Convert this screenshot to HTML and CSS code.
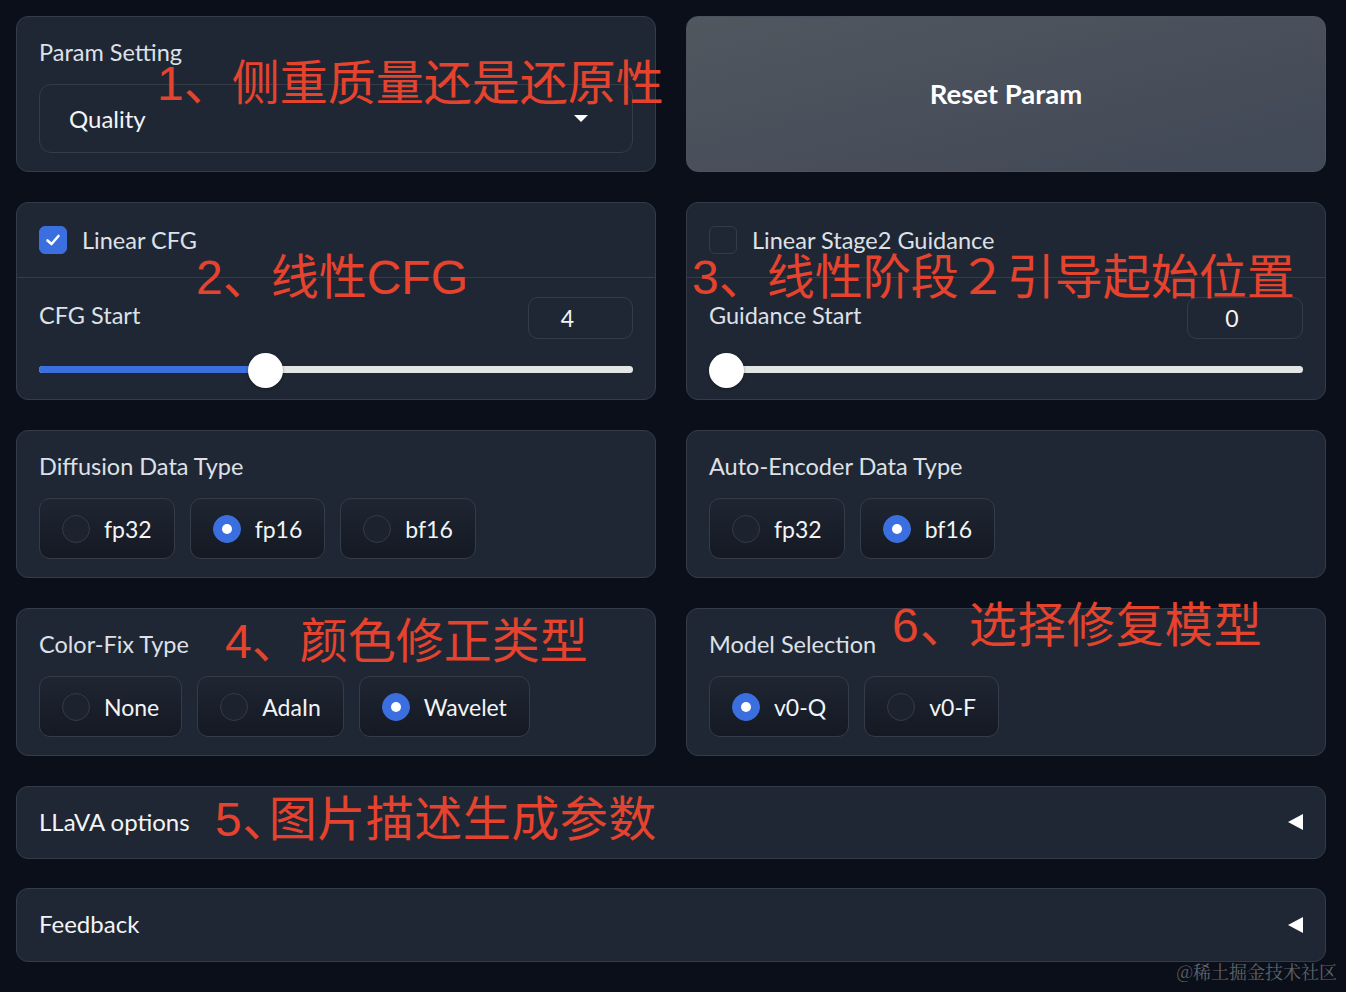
FILE: index.html
```html
<!DOCTYPE html>
<html lang="en">
<head>
    <meta charset="UTF-8">
    <meta name="viewport" content="width=device-width, initial-scale=1.0">
    <title>SUPIR Params</title>
    <link rel="stylesheet" href="styles.css">
</head>
<body>
    <main class="layout">
        <section class="panel panel-select">
            <div class="block-label">Param Setting</div>
            <div class="dropdown">
                <span>Quality</span>
                <span class="caret"></span>
            </div>
            <span class="note note-1">1、侧重质量还是还原性</span>
        </section>

        <button class="reset-btn">Reset Param</button>

        <section class="panel panel-slider">
            <div class="check-row">
                <span class="checkbox checked">
                    <svg width="18" height="18" viewBox="0 0 18 18"><polyline points="3.5,9.5 7.5,13 14.5,5" fill="none" stroke="#fff" stroke-width="2.6" stroke-linecap="round" stroke-linejoin="round"/></svg>
                </span>
                <span class="check-label">Linear CFG</span>
            </div>
            <div class="slider-block">
                <div class="slider-head">
                    <span class="block-label">CFG Start</span>
                    <span class="number-box">4</span>
                </div>
                <div class="slider" style="--value: 0.374">
                    <span class="slider-fill"></span>
                    <span class="slider-thumb"></span>
                </div>
            </div>
            <span class="note note-2">2、线性CFG</span>
        </section>

        <section class="panel panel-slider">
            <div class="check-row">
                <span class="checkbox"></span>
                <span class="check-label">Linear Stage2 Guidance</span>
            </div>
            <div class="slider-block">
                <div class="slider-head">
                    <span class="block-label">Guidance Start</span>
                    <span class="number-box wide">0</span>
                </div>
                <div class="slider" style="--value: 0">
                    <span class="slider-fill"></span>
                    <span class="slider-thumb"></span>
                </div>
            </div>
            <span class="note note-3">3、线性阶段２引导起始位置</span>
        </section>

        <section class="panel panel-radio">
            <div class="block-label">Diffusion Data Type</div>
            <div class="radio-group">
                <label class="radio-pill"><span class="radio"></span>fp32</label>
                <label class="radio-pill"><span class="radio checked"></span>fp16</label>
                <label class="radio-pill"><span class="radio"></span>bf16</label>
            </div>
        </section>

        <section class="panel panel-radio">
            <div class="block-label">Auto-Encoder Data Type</div>
            <div class="radio-group">
                <label class="radio-pill"><span class="radio"></span>fp32</label>
                <label class="radio-pill"><span class="radio checked"></span>bf16</label>
            </div>
        </section>

        <section class="panel panel-radio">
            <div class="block-label">Color-Fix Type</div>
            <div class="radio-group">
                <label class="radio-pill"><span class="radio"></span>None</label>
                <label class="radio-pill"><span class="radio"></span>AdaIn</label>
                <label class="radio-pill"><span class="radio checked"></span>Wavelet</label>
            </div>
            <span class="note note-4">4、颜色修正类型</span>
        </section>

        <section class="panel panel-radio">
            <div class="block-label">Model Selection</div>
            <div class="radio-group">
                <label class="radio-pill"><span class="radio checked"></span>v0-Q</label>
                <label class="radio-pill"><span class="radio"></span>v0-F</label>
            </div>
            <span class="note note-6">6、选择修复模型</span>
        </section>

        <section class="panel accordion">
            <span class="accordion-title">LLaVA options</span>
            <span class="accordion-icon"></span>
            <span class="note note-5">5<span class="tight">、</span>图片描述生成参数</span>
        </section>

        <section class="panel accordion">
            <span class="accordion-title">Feedback</span>
            <span class="accordion-icon"></span>
        </section>
    </main>

    <span class="watermark">@稀土掘金技术社区</span>
</body>
</html>
```

FILE: styles.css
```css
:root {
    --bg-color: #0b0f19;
    --panel-color: #202734;
    --border-color: #353c49;
    --label-color: #dde1e7;
    --text-color: #f3f4f6;
    --accent-color: #3b6fe0;
    --note-color: #e5432d;
    --radius: 12px;
}

* {
    box-sizing: border-box;
}

body {
    margin: 0;
    padding: 16px 20px 0 16px;
    min-height: 992px;
    background: var(--bg-color);
    font-family: Lato, 'Noto Sans', sans-serif;
    color: var(--text-color);
    position: relative;
}

.layout {
    display: grid;
    grid-template-columns: 640px 640px;
    column-gap: 30px;
    row-gap: 30px;
}

.panel {
    position: relative;
    background: var(--panel-color);
    border: 1px solid var(--border-color);
    border-radius: var(--radius);
}

.block-label {
    font-size: 23.5px;
    line-height: 28px;
    color: var(--label-color);
}

/* dropdown */
.panel-select {
    height: 156px;
    padding: 21px 22px 18px;
}

.dropdown {
    margin-top: 18px;
    height: 69px;
    border: 1px solid var(--border-color);
    border-radius: 12px;
    display: flex;
    align-items: center;
    justify-content: space-between;
    padding: 0 44px 0 29px;
    font-size: 24px;
}

.caret {
    width: 0;
    height: 0;
    border-left: 7px solid transparent;
    border-right: 7px solid transparent;
    border-top: 7px solid #fff;
}

.reset-btn {
    height: 156px;
    padding-bottom: 2px;
    border: 1px solid #4b5260;
    border-radius: var(--radius);
    background: linear-gradient(to bottom right, #50575f, #414856);
    color: #fff;
    font-family: inherit;
    font-size: 27.5px;
    font-weight: 700;
    cursor: pointer;
}

/* checkbox + slider */
.panel-slider {
    height: 198px;
}

.check-row {
    display: flex;
    align-items: center;
    gap: 15px;
    padding: 23px 22px;
    border-bottom: 1px solid var(--border-color);
    font-size: 23.5px;
    line-height: 28px;
    color: var(--label-color);
}

.checkbox {
    width: 28px;
    height: 28px;
    border-radius: 6px;
    border: 1px solid var(--border-color);
    background: var(--panel-color);
    display: flex;
    align-items: center;
    justify-content: center;
}

.checkbox.checked {
    background: var(--accent-color);
    border-color: var(--accent-color);
}

.slider-block {
    padding: 19px 22px 0;
}

.slider-head {
    display: flex;
    justify-content: space-between;
    align-items: center;
}

.slider-head .block-label {
    margin-top: -7px;
}

.number-box {
    width: 105px;
    height: 42px;
    padding-right: 26px;
    border: 1px solid var(--border-color);
    border-radius: 10px;
    display: flex;
    align-items: center;
    justify-content: center;
    font-size: 23px;
}

.number-box.wide {
    width: 116px;
}

.slider {
    position: relative;
    margin-top: 27px;
    height: 7px;
    border-radius: 4px;
    background: #e2e6e5;
}

.slider-fill {
    display: block;
    height: 100%;
    width: calc(17px + (100% - 35px) * var(--value));
    border-radius: 4px;
    background: var(--accent-color);
}

.slider-thumb {
    position: absolute;
    top: 50%;
    left: calc((100% - 35px) * var(--value));
    width: 35px;
    height: 35px;
    margin-top: -17px;
    border-radius: 50%;
    background: #fff;
    box-shadow: 0 1px 3px rgba(0, 0, 0, 0.4);
}

/* radio groups */
.panel-radio {
    height: 148px;
    padding: 21px 22px 18px;
}

.radio-group {
    display: flex;
    gap: 15px;
    margin-top: 18px;
}

.radio-pill {
    height: 61px;
    display: flex;
    align-items: center;
    gap: 14px;
    padding: 0 22px;
    border: 1px solid var(--border-color);
    border-radius: 11px;
    background: linear-gradient(to top, #141923, #1f2632);
    font-size: 23px;
    color: var(--text-color);
}

.radio {
    width: 28px;
    height: 28px;
    border-radius: 50%;
    border: 1px solid #343b47;
    background: #1d232e;
    display: flex;
    align-items: center;
    justify-content: center;
}

.radio.checked {
    background: var(--accent-color);
    border-color: var(--accent-color);
}

.radio.checked::after {
    content: '';
    width: 10px;
    height: 10px;
    border-radius: 50%;
    background: #fff;
}

/* accordions */
.accordion {
    grid-column: 1 / -1;
    height: 73px;
    display: flex;
    align-items: center;
    justify-content: space-between;
    padding: 0 22px 3px;
}

.accordion + .accordion {
    height: 74px;
    margin-top: -1px;
}

.accordion-title {
    font-size: 24px;
    color: var(--text-color);
}

.accordion-icon {
    width: 0;
    height: 0;
    margin-top: 2px;
    border-top: 8px solid transparent;
    border-bottom: 8px solid transparent;
    border-right: 15px solid #fff;
}

/* red annotations over the screenshot */
.note {
    position: absolute;
    font-family: 'Liberation Sans', 'Noto Sans CJK SC', sans-serif;
    font-size: 48px;
    line-height: 48px;
    color: var(--note-color);
    white-space: nowrap;
    pointer-events: none;
}

.note .tight {
    margin-right: -22px;
}

.note-1 { left: 140px; top: 43px; }
.note-2 { left: 179px; top: 51px; }
.note-3 { left: 5px; top: 51px; }
.note-4 { left: 208px; top: 9px; }
.note-5 { left: 198px; top: 9px; letter-spacing: 0.5px; }
.note-6 { left: 205px; top: -7px; letter-spacing: 1px; }

.watermark {
    position: absolute;
    right: 9px;
    bottom: 8px;
    font-family: 'Noto Serif CJK SC', 'Noto Sans CJK SC', serif;
    font-size: 18px;
    color: #5f636b;
}
```
